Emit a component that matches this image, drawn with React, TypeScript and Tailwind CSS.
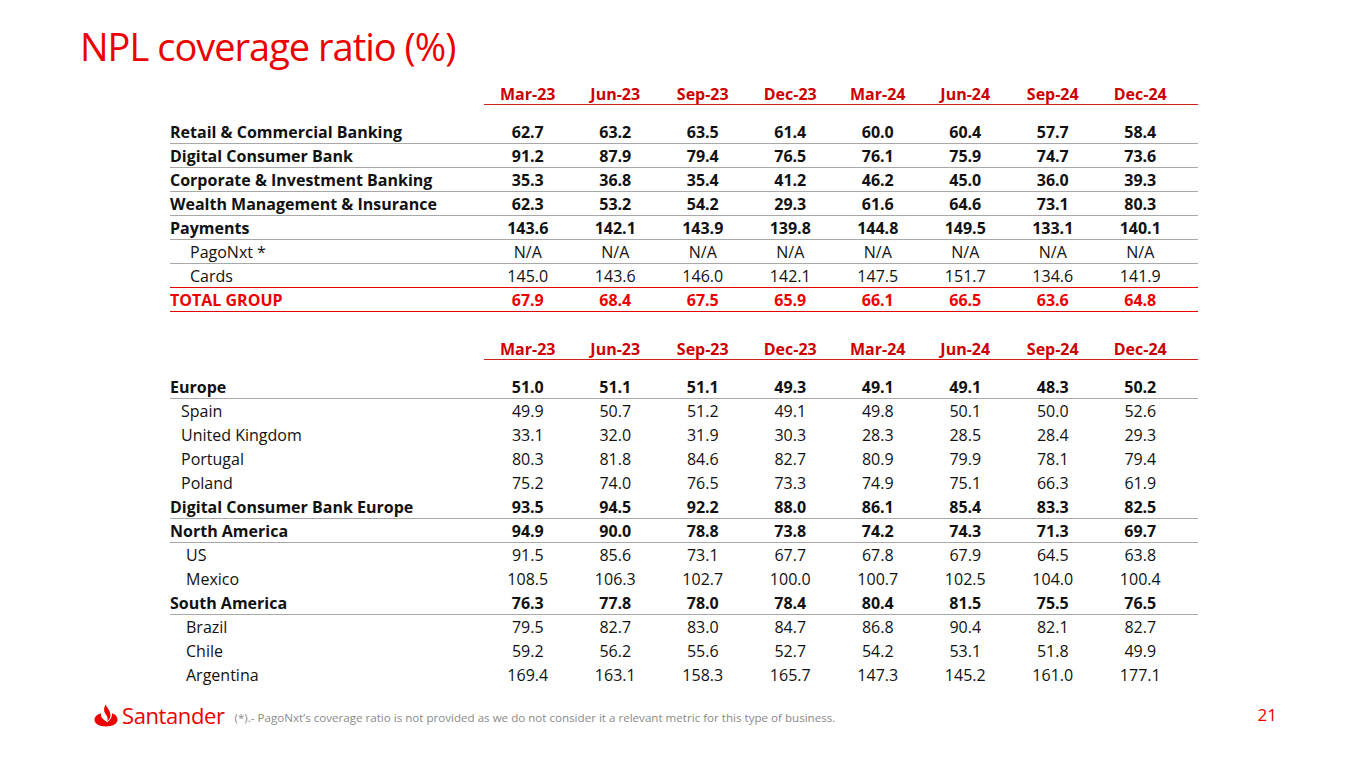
import React from "react";

type Row = { label: string; vals: string[]; kind: "bold" | "sub" | "total"; indent?: number; line: "grey" | "red" | "none" };

const headers = ["Mar-23", "Jun-23", "Sep-23", "Dec-23", "Mar-24", "Jun-24", "Sep-24", "Dec-24"];

const table1: Row[] = [
  { label: "Retail & Commercial Banking", vals: ["62.7", "63.2", "63.5", "61.4", "60.0", "60.4", "57.7", "58.4"], kind: "bold", line: "grey" },
  { label: "Digital Consumer Bank", vals: ["91.2", "87.9", "79.4", "76.5", "76.1", "75.9", "74.7", "73.6"], kind: "bold", line: "grey" },
  { label: "Corporate & Investment Banking", vals: ["35.3", "36.8", "35.4", "41.2", "46.2", "45.0", "36.0", "39.3"], kind: "bold", line: "grey" },
  { label: "Wealth Management & Insurance", vals: ["62.3", "53.2", "54.2", "29.3", "61.6", "64.6", "73.1", "80.3"], kind: "bold", line: "grey" },
  { label: "Payments", vals: ["143.6", "142.1", "143.9", "139.8", "144.8", "149.5", "133.1", "140.1"], kind: "bold", line: "grey" },
  { label: "PagoNxt *", vals: ["N/A", "N/A", "N/A", "N/A", "N/A", "N/A", "N/A", "N/A"], kind: "sub", indent: 1, line: "grey" },
  { label: "Cards", vals: ["145.0", "143.6", "146.0", "142.1", "147.5", "151.7", "134.6", "141.9"], kind: "sub", indent: 1, line: "red" },
  { label: "TOTAL GROUP", vals: ["67.9", "68.4", "67.5", "65.9", "66.1", "66.5", "63.6", "64.8"], kind: "total", line: "red" },
];

const table2: Row[] = [
  { label: "Europe", vals: ["51.0", "51.1", "51.1", "49.3", "49.1", "49.1", "48.3", "50.2"], kind: "bold", line: "grey" },
  { label: "Spain", vals: ["49.9", "50.7", "51.2", "49.1", "49.8", "50.1", "50.0", "52.6"], kind: "sub", indent: 2, line: "none" },
  { label: "United Kingdom", vals: ["33.1", "32.0", "31.9", "30.3", "28.3", "28.5", "28.4", "29.3"], kind: "sub", indent: 2, line: "none" },
  { label: "Portugal", vals: ["80.3", "81.8", "84.6", "82.7", "80.9", "79.9", "78.1", "79.4"], kind: "sub", indent: 2, line: "none" },
  { label: "Poland", vals: ["75.2", "74.0", "76.5", "73.3", "74.9", "75.1", "66.3", "61.9"], kind: "sub", indent: 2, line: "none" },
  { label: "Digital Consumer Bank Europe", vals: ["93.5", "94.5", "92.2", "88.0", "86.1", "85.4", "83.3", "82.5"], kind: "bold", line: "grey" },
  { label: "North America", vals: ["94.9", "90.0", "78.8", "73.8", "74.2", "74.3", "71.3", "69.7"], kind: "bold", line: "grey" },
  { label: "US", vals: ["91.5", "85.6", "73.1", "67.7", "67.8", "67.9", "64.5", "63.8"], kind: "sub", indent: 3, line: "none" },
  { label: "Mexico", vals: ["108.5", "106.3", "102.7", "100.0", "100.7", "102.5", "104.0", "100.4"], kind: "sub", indent: 3, line: "none" },
  { label: "South America", vals: ["76.3", "77.8", "78.0", "78.4", "80.4", "81.5", "75.5", "76.5"], kind: "bold", line: "grey" },
  { label: "Brazil", vals: ["79.5", "82.7", "83.0", "84.7", "86.8", "90.4", "82.1", "82.7"], kind: "sub", indent: 3, line: "none" },
  { label: "Chile", vals: ["59.2", "56.2", "55.6", "52.7", "54.2", "53.1", "51.8", "49.9"], kind: "sub", indent: 3, line: "none" },
  { label: "Argentina", vals: ["169.4", "163.1", "158.3", "165.7", "147.3", "145.2", "161.0", "177.1"], kind: "sub", indent: 3, line: "none" },
];

function HeaderRow() {
  return (
    <div className="flex h-6">
      <div className="w-[314px]" />
      <div className="flex w-[714px] border-b border-[#d0201c] items-end pb-[2px]">
        {headers.map((h) => (
          <div key={h} className="w-[87.5px] text-center font-bold text-[16px] text-[#cc0000] leading-none">
            {h}
          </div>
        ))}
      </div>
    </div>
  );
}

function DataRow({ r }: { r: Row }) {
  const lineCls =
    r.line === "grey" ? "border-b border-[#a8a8a8]" : r.line === "red" ? "border-b border-[#e60000]" : "";
  const txt =
    r.kind === "bold" ? "font-bold text-[#111]" : r.kind === "total" ? "font-bold text-[#ec0000]" : "font-normal text-[#111]";
  const indentCls = r.indent === 1 ? "pl-[20px]" : r.indent === 2 ? "pl-[11px]" : r.indent === 3 ? "pl-[16px]" : "pl-0";
  return (
    <div className={`flex h-6 items-center ${lineCls} ${txt} text-[16px] leading-none`}>
      <div className={`w-[314px] ${indentCls}`}>{r.label}</div>
      {r.vals.map((v, i) => (
        <div key={i} className="w-[87.5px] text-center">
          {v}
        </div>
      ))}
      <div className="w-[14px]" />
    </div>
  );
}

function Logo() {
  return (
    <div className="flex items-center gap-[3px]">
      <svg width="26" height="23" viewBox="0 0 26 24">
        <path
          d="M12.5 0.5 C14.5 4.5 18.2 7.5 17.6 12.5 C17.3 15 15.8 16.8 14.4 18 C15.2 15.2 14.4 13 12.5 10.5 C10.6 8 10.3 4.5 12.5 0.5 Z"
          fill="#ec0000"
        />
        <path
          d="M1 16.5 C1 12.8 4.5 10.6 8.2 9.6 C7.4 11.6 7.8 13.6 9.6 15.4 C11 16.8 12.6 17.8 14.3 19 C17.4 16.8 19.6 13.8 19.2 9.6 C22.6 10.6 25 12.8 25 16.5 C25 21 19.5 23.5 13 23.5 C6.5 23.5 1 21 1 16.5 Z"
          fill="#ec0000"
        />
      </svg>
      <span className="text-[#ec0000] text-[22px] leading-none font-normal tracking-[-0.4px]">Santander</span>
    </div>
  );
}

export default function App() {
  return (
    <div
      className="w-[1365px] h-[768px] bg-white relative overflow-hidden"
      style={{ fontFamily: '"Open Sans", "Noto Sans", sans-serif' }}
    >
      <div className="pl-[80px] pt-[22px] h-[81px]">
        <h1 className="text-[#ec0000] text-[38px] leading-[48px] font-normal tracking-[-1px]">NPL coverage ratio (%)</h1>
      </div>
      <div className="ml-[170px] w-[1028px]">
        <HeaderRow />
        <div className="h-[15px]" />
        {table1.map((r) => (
          <DataRow key={r.label} r={r} />
        ))}
        <div className="h-6" />
        <HeaderRow />
        <div className="h-[15px]" />
        {table2.map((r) => (
          <DataRow key={r.label} r={r} />
        ))}
      </div>
      <div className="flex items-center mt-[16px] pl-[93px] pr-[88px] h-[24px]">
        <Logo />
        <span className="ml-[10px] mt-[5px] text-[#8a8a8a] text-[11.6px]">
          (*).- PagoNxt’s coverage ratio is not provided as we do not consider it a relevant metric for this type of business.
        </span>
        <span className="ml-auto text-[#ec0000] text-[17px]">21</span>
      </div>
    </div>
  );
}
